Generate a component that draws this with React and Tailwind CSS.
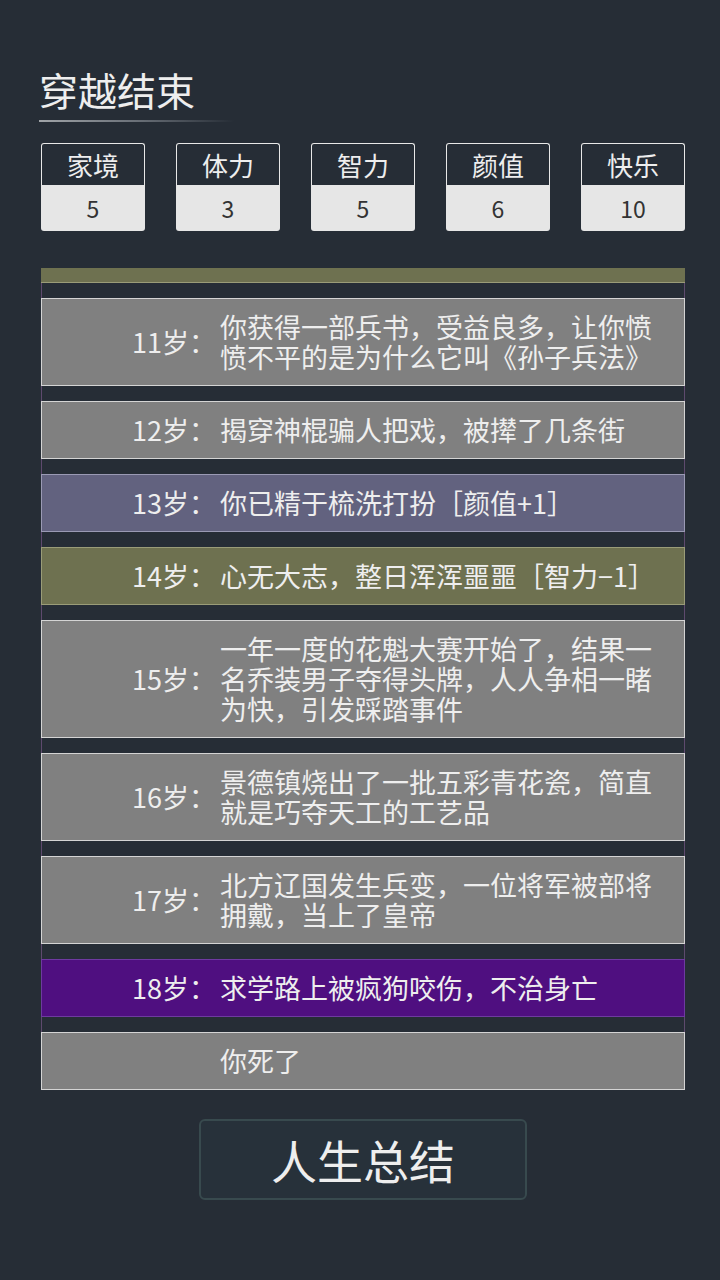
// App.jsx - life summary screen
const stats = [
  { name: "家境", value: 5 },
  { name: "体力", value: 3 },
  { name: "智力", value: 5 },
  { name: "颜值", value: 6 },
  { name: "快乐", value: 10 },
];

const events = [
  { age: "11岁：", text: "你获得一部兵书，受益良多，让你愤愤不平的是为什么它叫《孙子兵法》", tone: "gray" },
  { age: "12岁：", text: "揭穿神棍骗人把戏，被撵了几条街", tone: "gray" },
  { age: "13岁：", text: "你已精于梳洗打扮［颜值+1］", tone: "slate" },
  { age: "14岁：", text: "心无大志，整日浑浑噩噩［智力−1］", tone: "olive" },
  { age: "15岁：", text: "一年一度的花魁大赛开始了，结果一名乔装男子夺得头牌，人人争相一睹为快，引发踩踏事件", tone: "gray" },
  { age: "16岁：", text: "景德镇烧出了一批五彩青花瓷，简直就是巧夺天工的工艺品", tone: "gray" },
  { age: "17岁：", text: "北方辽国发生兵变，一位将军被部将拥戴，当上了皇帝", tone: "gray" },
  { age: "18岁：", text: "求学路上被疯狗咬伤，不治身亡", tone: "purple" },
  { age: "", text: "你死了", tone: "gray" },
];

const toneClass = {
  gray: "bg-[#808080] border-[#d4d4d4]",
  slate: "bg-[#62627f] border-[#9a9ab4]",
  olive: "bg-[#6e7150] border-[#9a9c78]",
  purple: "bg-[#4f0f80] border-[#6e3aa0]",
};

function Spacer() {
  return <div className="h-[15px] border-x border-[#5e4a6e]" />;
}

function EventRow({ age, text, tone }) {
  return (
    <div className={`flex items-center border py-[13px] ${toneClass[tone]}`}>
      <div className="w-[174px] shrink-0 text-right text-[27px] leading-[30px] text-[#eeeeee]">
        {age}
      </div>
      <div className="ml-[4px] w-[445px] text-[27px] leading-[30px] text-[#eeeeee]">
        {text}
      </div>
    </div>
  );
}

export default function App() {
  return (
    <div
      className="min-h-screen w-[720px] bg-[#262d36] pl-[41px]"
      style={{ fontFamily: '"Noto Sans CJK SC", "Noto Sans", sans-serif' }}
    >
      <div className="w-[644px]">
        {/* Title */}
        <h1 className="pt-[65px] -ml-[2px] text-[39px] leading-[48px] text-[#eeeeee]">穿越结束</h1>
        <div className="mt-[7px] -ml-[2px] h-[2px] w-[195px] bg-gradient-to-r from-[#a0a4a8] via-[#6a7078] to-transparent" />

        {/* Stats */}
        <div className="mt-[21px] grid grid-cols-5 gap-[31px]">
          {stats.map((s) => (
            <div key={s.name} className="w-[104px]">
              <div className="flex h-[42px] items-center justify-center rounded-t-[3px] border border-b-0 border-[#e8e8e8] text-[26px] text-[#eeeeee]">
                {s.name}
              </div>
              <div className="flex h-[46px] items-center justify-center rounded-b-[3px] bg-[#e6e6e6] text-[23px] text-[#333333]">
                {s.value}
              </div>
            </div>
          ))}
        </div>

        {/* Event list */}
        <div className="mt-[37px]">
          <div className="h-[15px] border-b border-[#9a9c78] bg-[#6e7150]" />
          <Spacer />
          {events.map((e, i) => (
            <div key={i}>
              <EventRow {...e} />
              {i < events.length - 1 && <Spacer />}
            </div>
          ))}
        </div>

        {/* Summary button */}
        <div className="mt-[29px] flex justify-center">
          <button className="flex h-[81px] w-[328px] items-center justify-center rounded-md border-2 border-[#384a4e] bg-[#27313a] text-[46px] text-[#eeeeee]">
            人生总结
          </button>
        </div>
      </div>
    </div>
  );
}
